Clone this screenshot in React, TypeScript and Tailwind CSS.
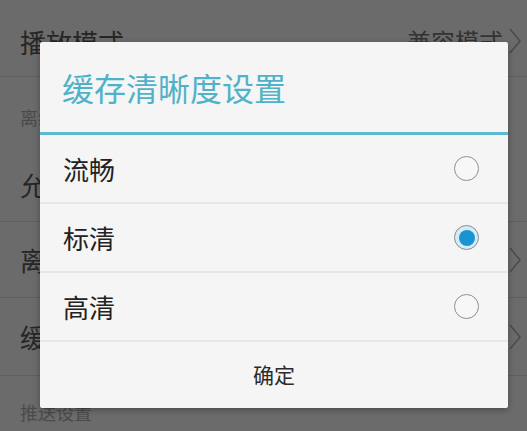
import { useState } from "react";

const font = { fontFamily: '"Noto Sans CJK SC", "Noto Sans", sans-serif' };

function Chevron() {
  return (
    <svg width="12" height="26" viewBox="0 0 12 26" fill="none" className="shrink-0">
      <path d="M1 1l10 12L1 25" stroke="#4a4a4a" strokeWidth="1.5" />
    </svg>
  );
}

function Radio({ checked }: { checked: boolean }) {
  return checked ? (
    <div className="w-[25px] h-[25px] rounded-full border-[1.5px] border-[#8c8c8c] bg-[#d3ecf6] flex items-center justify-center">
      <div className="w-[16px] h-[16px] rounded-full bg-[#1b93d2]" />
    </div>
  ) : (
    <div className="w-[25px] h-[25px] rounded-full border-[1.5px] border-[#8f8f8f] bg-[#f7f7f7]" />
  );
}

const options = ["流畅", "标清", "高清"];

export default function App() {
  const [selected, setSelected] = useState(1);

  return (
    <div style={font} className="relative w-[527px] h-[431px] overflow-hidden bg-[#6b6b6b]">
      {/* dimmed settings page */}
      <div className="flex flex-col">
        <div className="h-[77px] flex items-center justify-between pl-[20px] pr-[6px] border-b border-[#5f5f5f] pt-[6px]">
          <span className="text-[26px] text-[#262626]">播放模式</span>
          <div className="flex items-center gap-[6px]">
            <span className="text-[24px] text-[#333333]">兼容模式</span>
            <Chevron />
          </div>
        </div>
        <div className="h-[70px] flex items-end pl-[20px] pb-[16px]">
          <span className="text-[18px] text-[#4a4a4a]">离线设置</span>
        </div>
        <div className="h-[75px] flex items-center justify-between pl-[20px] pr-[6px] border-b border-[#5f5f5f]">
          <span className="text-[26px] text-[#262626]">允许非WiFi网络缓存</span>
        </div>
        <div className="h-[76px] flex items-center justify-between pl-[20px] pr-[6px] border-b border-[#5f5f5f]">
          <span className="text-[26px] text-[#262626]">离线缓存目录</span>
          <Chevron />
        </div>
        <div className="h-[78px] flex items-center justify-between pl-[20px] pr-[6px] border-b border-[#5f5f5f]">
          <span className="text-[26px] text-[#262626]">缓存清晰度</span>
          <Chevron />
        </div>
        <div className="h-[60px] flex items-center pl-[20px] pt-[12px]">
          <span className="text-[18px] text-[#4a4a4a]">推送设置</span>
        </div>
      </div>

      {/* dialog */}
      <div className="absolute left-[40px] top-[42px] w-[468px] bg-[#f5f5f5] rounded-[2px] shadow-[0_2px_6px_rgba(0,0,0,0.3)] flex flex-col">
        <div className="h-[90px] flex items-center pl-[22px]">
          <span className="text-[32px] text-[#4fb2c8]">缓存清晰度设置</span>
        </div>
        <div className="h-[3px] bg-[#5cbad0]" />
        {options.map((o, i) => (
          <div
            key={o}
            onClick={() => setSelected(i)}
            className="h-[69px] flex items-center justify-between pl-[23px] pr-[29px] border-b-2 border-[#e6e6e6]"
          >
            <span className="text-[26px] text-[#222222]">{o}</span>
            <Radio checked={selected === i} />
          </div>
        ))}
        <div className="h-[66px] flex items-center justify-center">
          <span className="text-[21px] text-[#2b2b2b]">确定</span>
        </div>
      </div>
    </div>
  );
}
